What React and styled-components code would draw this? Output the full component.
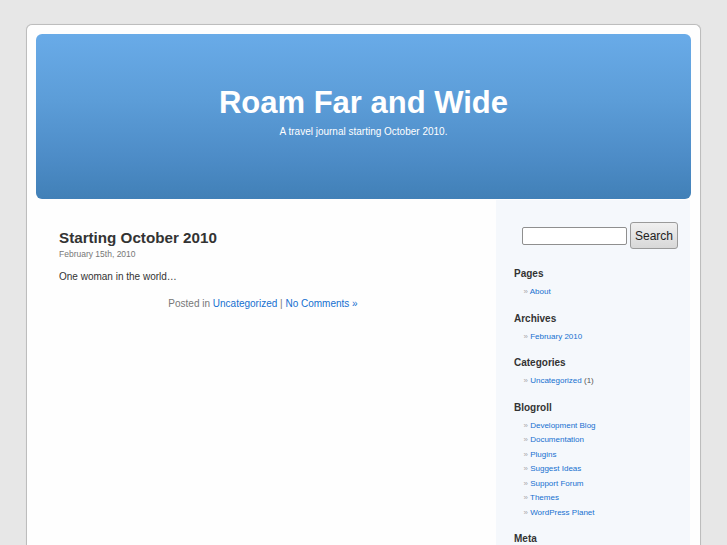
import React from "react";
import styled, { createGlobalStyle } from "styled-components";

const GlobalStyle = createGlobalStyle`
  html, body { margin: 0; padding: 0; }
  body {
    background: #e7e7e7;
    font-family: "Liberation Sans", Arial, sans-serif;
    color: #333;
  }
  a { color: #1570d0; text-decoration: none; }
`;

const Page = styled.div`
  box-sizing: border-box;
  width: 675px;
  min-height: 530px;
  margin: 24px auto 0;
  padding: 9px 9px 0;
  background: #fefefe;
  border: 1px solid #bdbdbd;
  border-bottom: none;
  border-radius: 6px 6px 0 0;
  box-shadow: 0 0 1px #d0d0d0;
`;

const Header = styled.header`
  box-sizing: border-box;
  height: 165px;
  padding-top: 51px;
  border-radius: 6px;
  text-align: center;
  background: linear-gradient(to bottom, #69abe8 0%, #5c9dd8 40%, #4d8cc7 75%, #4180b7 100%);
`;

const SiteTitle = styled.h1`
  margin: 0;
  font-size: 31px;
  font-weight: bold;
  line-height: normal;
  color: #fff;
`;

const Tagline = styled.div`
  margin-top: 5px;
  font-size: 10px;
  line-height: 12px;
  color: #fff;
`;

const Main = styled.div`
  display: flex;
  margin-top: 1px;
`;

const Content = styled.main`
  box-sizing: border-box;
  width: 460px;
  padding: 29px 29px 0 23px;
`;

const PostTitle = styled.h2`
  margin: 0;
  font-size: 15.2px;
  line-height: 18px;
  font-weight: bold;
  color: #333;
`;

const PostDate = styled.div`
  margin-top: 2px;
  font-size: 8.5px;
  line-height: 10px;
  color: #777;
`;

const PostBody = styled.p`
  margin: 12px 0 0;
  font-size: 10px;
  line-height: 12px;
  color: #333;
`;

const PostMeta = styled.p`
  margin: 15px 0 0;
  font-size: 10px;
  line-height: 12px;
  color: #777;
  text-align: center;
`;

const Sidebar = styled.aside`
  box-sizing: border-box;
  width: 194px;
  min-height: 345px;
  padding: 22px 0 0 18px;
  background: #f5f8fc;
`;

const SearchForm = styled.form`
  display: flex;
  align-items: center;
  gap: 3px;
  margin: 0 0 19px 8px;
`;

const SearchInput = styled.input`
  box-sizing: border-box;
  width: 105px;
  height: 18px;
  margin: 0;
  padding: 1px 3px;
  border: 1px solid #8f8f8f;
  border-radius: 2px;
  background: #fff;
  font-family: "Liberation Sans", Arial, sans-serif;
  font-size: 11px;
`;

const SearchButton = styled.button`
  box-sizing: border-box;
  width: 48px;
  height: 27px;
  margin: 0;
  padding: 0;
  border: 1px solid #9a9a9a;
  border-radius: 3px;
  background: linear-gradient(to bottom, #f0f0f0, #d8d8d8);
  font-family: "Liberation Sans", Arial, sans-serif;
  font-size: 12px;
  color: #222;
`;

const WidgetTitle = styled.h3`
  margin: 0 0 5px;
  font-size: 10px;
  line-height: 12px;
  font-weight: bold;
  color: #333;
`;

const WidgetList = styled.ul`
  list-style: none;
  margin: 0 0 13px;
  padding: 0 0 0 9.5px;
`;

const WidgetItem = styled.li`
  font-size: 8px;
  line-height: 14.5px;
  color: #555;
  &::before {
    content: "\\00BB\\0020";
    color: #aaa;
  }
`;

const widgets = [
  { title: "Pages", items: [{ label: "About" }] },
  { title: "Archives", items: [{ label: "February 2010" }] },
  { title: "Categories", items: [{ label: "Uncategorized", count: "(1)" }] },
  {
    title: "Blogroll",
    items: [
      { label: "Development Blog" },
      { label: "Documentation" },
      { label: "Plugins" },
      { label: "Suggest Ideas" },
      { label: "Support Forum" },
      { label: "Themes" },
      { label: "WordPress Planet" },
    ],
  },
  { title: "Meta", items: [] },
];

export default function App() {
  return (
    <>
      <GlobalStyle />
      <Page>
        <Header>
          <SiteTitle>Roam Far and Wide</SiteTitle>
          <Tagline>A travel journal starting October 2010.</Tagline>
        </Header>
        <Main>
          <Content>
            <PostTitle>Starting October 2010</PostTitle>
            <PostDate>February 15th, 2010</PostDate>
            <PostBody>One woman in the world…</PostBody>
            <PostMeta>
              Posted in <a href="#">Uncategorized</a> | <a href="#">No Comments »</a>
            </PostMeta>
          </Content>
          <Sidebar>
            <SearchForm onSubmit={(e) => e.preventDefault()}>
              <SearchInput type="text" />
              <SearchButton type="submit">Search</SearchButton>
            </SearchForm>
            {widgets.map((w) => (
              <div key={w.title}>
                <WidgetTitle>{w.title}</WidgetTitle>
                {w.items.length > 0 && (
                  <WidgetList>
                    {w.items.map((it) => (
                      <WidgetItem key={it.label}>
                        <a href="#">{it.label}</a>
                        {it.count ? ` ${it.count}` : null}
                      </WidgetItem>
                    ))}
                  </WidgetList>
                )}
              </div>
            ))}
          </Sidebar>
        </Main>
      </Page>
    </>
  );
}
